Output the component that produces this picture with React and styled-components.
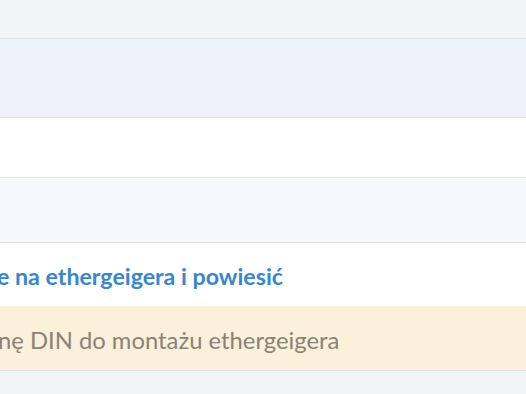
import React from "react";
import styled, { createGlobalStyle } from "styled-components";

const Global = createGlobalStyle`
  *, *::before, *::after { box-sizing: border-box; }
  html, body { margin: 0; padding: 0; background: #f3f4f6; }
  body { font-family: Lato, "Noto Sans", sans-serif; }
`;

const Page = styled.div`
  display: flex;
  flex-direction: column;
  width: 526px;
  height: 394px;
  overflow: hidden;
  background: #f3f4f6;
`;

const Header = styled.div`
  height: 38px;
  flex: none;
`;

const tones = {
  blue: "#eef2fb",
  white: "#ffffff",
  soft: "#f7f8fc",
  warn: "#fbf0da",
};

const Row = styled.div`
  flex: none;
  height: ${(p) => p.$h}px;
  padding-top: 3px;
  background: ${(p) => tones[p.$tone]};
  border-top: ${(p) => (p.$top ? "1px solid #dbe3ea" : "none")};
  display: flex;
  align-items: center;
  overflow: hidden;
  white-space: nowrap;
`;

const Task = styled.span`
  font-size: ${(p) => p.$size}px;
  font-weight: ${(p) => (p.$link ? 700 : 400)};
  color: ${(p) => (p.$link ? "#3a86c8" : "#8a8278")};
  margin-left: ${(p) => p.$shift}px;
`;

const Footer = styled.div`
  flex: 1;
  border-top: 1px solid #dbe3ea;
`;

export default function App() {
  return (
    <Page>
      <Global />
      <Header />
      <Row $tone="blue" $h={79} $top />
      <Row $tone="white" $h={60} $top />
      <Row $tone="soft" $h={65} $top />
      <Row $tone="white" $h={64} $top>
        <Task $link $size={23.2} $shift={-3}>e na ethergeigera i powiesić</Task>
      </Row>
      <Row $tone="warn" $h={64}>
        <Task $size={23.8} $shift={-2}>nę DIN do montażu ethergeigera</Task>
      </Row>
      <Footer />
    </Page>
  );
}
